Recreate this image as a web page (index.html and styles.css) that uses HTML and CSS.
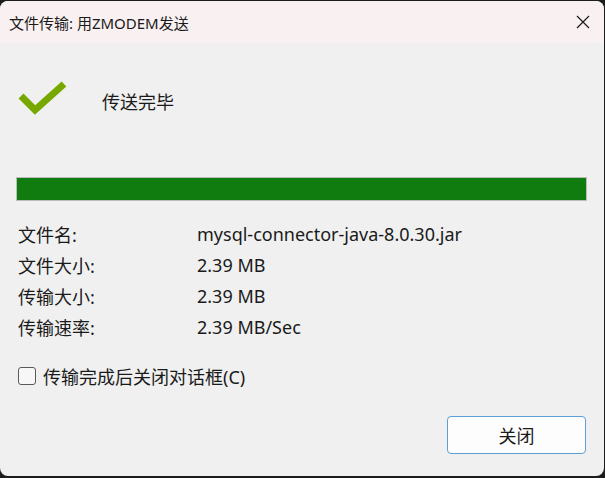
FILE: index.html
```html
<html>
  <head>
    <title>文件传输: 用ZMODEM发送</title>
    <link rel="stylesheet" href="styles.css">
  </head>
  <body>
    <div class="window">
      <div class="titlebar">
        <span class="title">文件传输: 用ZMODEM发送</span>
        <svg class="close" width="14" height="14" viewBox="0 0 14 14">
          <path d="M1 1 L13 13 M13 1 L1 13" stroke="#1a1a1a" stroke-width="1.2" fill="none"/>
        </svg>
      </div>
      <div class="content">
        <div class="status">
          <svg class="check" width="50" height="34" viewBox="0 0 50 34">
            <path d="M3 15 L17 29 L46 3" stroke="#76a800" stroke-width="7" fill="none"/>
          </svg>
          <span class="status-text">传送完毕</span>
        </div>
        <div class="progress"><div class="progress-fill" style="width: 100%"></div></div>
        <div class="info">
          <span class="label">文件名:</span><span class="value">mysql-connector-java-8.0.30.jar</span>
          <span class="label">文件大小:</span><span class="value">2.39 MB</span>
          <span class="label">传输大小:</span><span class="value">2.39 MB</span>
          <span class="label">传输速率:</span><span class="value">2.39 MB/Sec</span>
        </div>
        <label class="option">
          <span class="box"></span>
          传输完成后关闭对话框(C)
        </label>
        <div class="buttons">
          <button class="btn">关闭</button>
        </div>
      </div>
    </div>
  </body>
</html>
```

FILE: styles.css
```css
/* dialog window */
body {
  margin: 0;
  background-color: #1c1c1c;
  font-family: "Noto Sans", "Noto Sans CJK SC", sans-serif;
  color: #1a1a1a;
}

.window {
  margin-top: 1px;
  width: 604px;
  height: 475px;
  border-radius: 8px;
  overflow: hidden;
  background-color: #f0f0f0;
  display: flex;
  flex-direction: column;
}

.titlebar {
  height: 42px;
  background-color: #f9f0f1;
  display: flex;
  align-items: center;
  justify-content: space-between;
  padding: 0 14px 0 9px;
}

.title {
  font-size: 15px;
}

.close {
  display: block;
}

.content {
  padding: 0 17px 0 16px;
  display: flex;
  flex-direction: column;
}

.status {
  display: flex;
  align-items: center;
  margin-top: 38px;
  padding-left: 2px;
  height: 34px;
}

.status-text {
  margin-left: 34px;
  font-size: 18px;
  padding-top: 6px;
}

.progress {
  margin-top: 62px;
  height: 22px;
  border: 1px solid #bcbcbc;
  background-color: #e6e6e6;
}

.progress-fill {
  height: 100%;
  background-color: #107c10;
}

.info {
  margin-top: 17px;
  padding-left: 2px;
  display: grid;
  grid-template-columns: 179px 1fr;
  grid-auto-rows: 31px;
  align-items: center;
  font-size: 18px;
}

.option {
  margin-top: 21px;
  padding-left: 2px;
  display: flex;
  align-items: center;
  font-size: 18px;
}

.box {
  width: 16px;
  height: 16px;
  border: 1px solid #5a5a5a;
  border-radius: 3px;
  background-color: #f7f7f7;
  margin-right: 7px;
}

.buttons {
  margin-top: 27px;
  display: flex;
  justify-content: flex-end;
  padding-right: 1px;
}

.btn {
  width: 139px;
  height: 38px;
  border: 1px solid #5c9fd8;
  border-radius: 4px;
  background-color: #fdfdfd;
  font-family: "Noto Sans", "Noto Sans CJK SC", sans-serif;
  font-size: 18px;
  color: #1a1a1a;
}
```
